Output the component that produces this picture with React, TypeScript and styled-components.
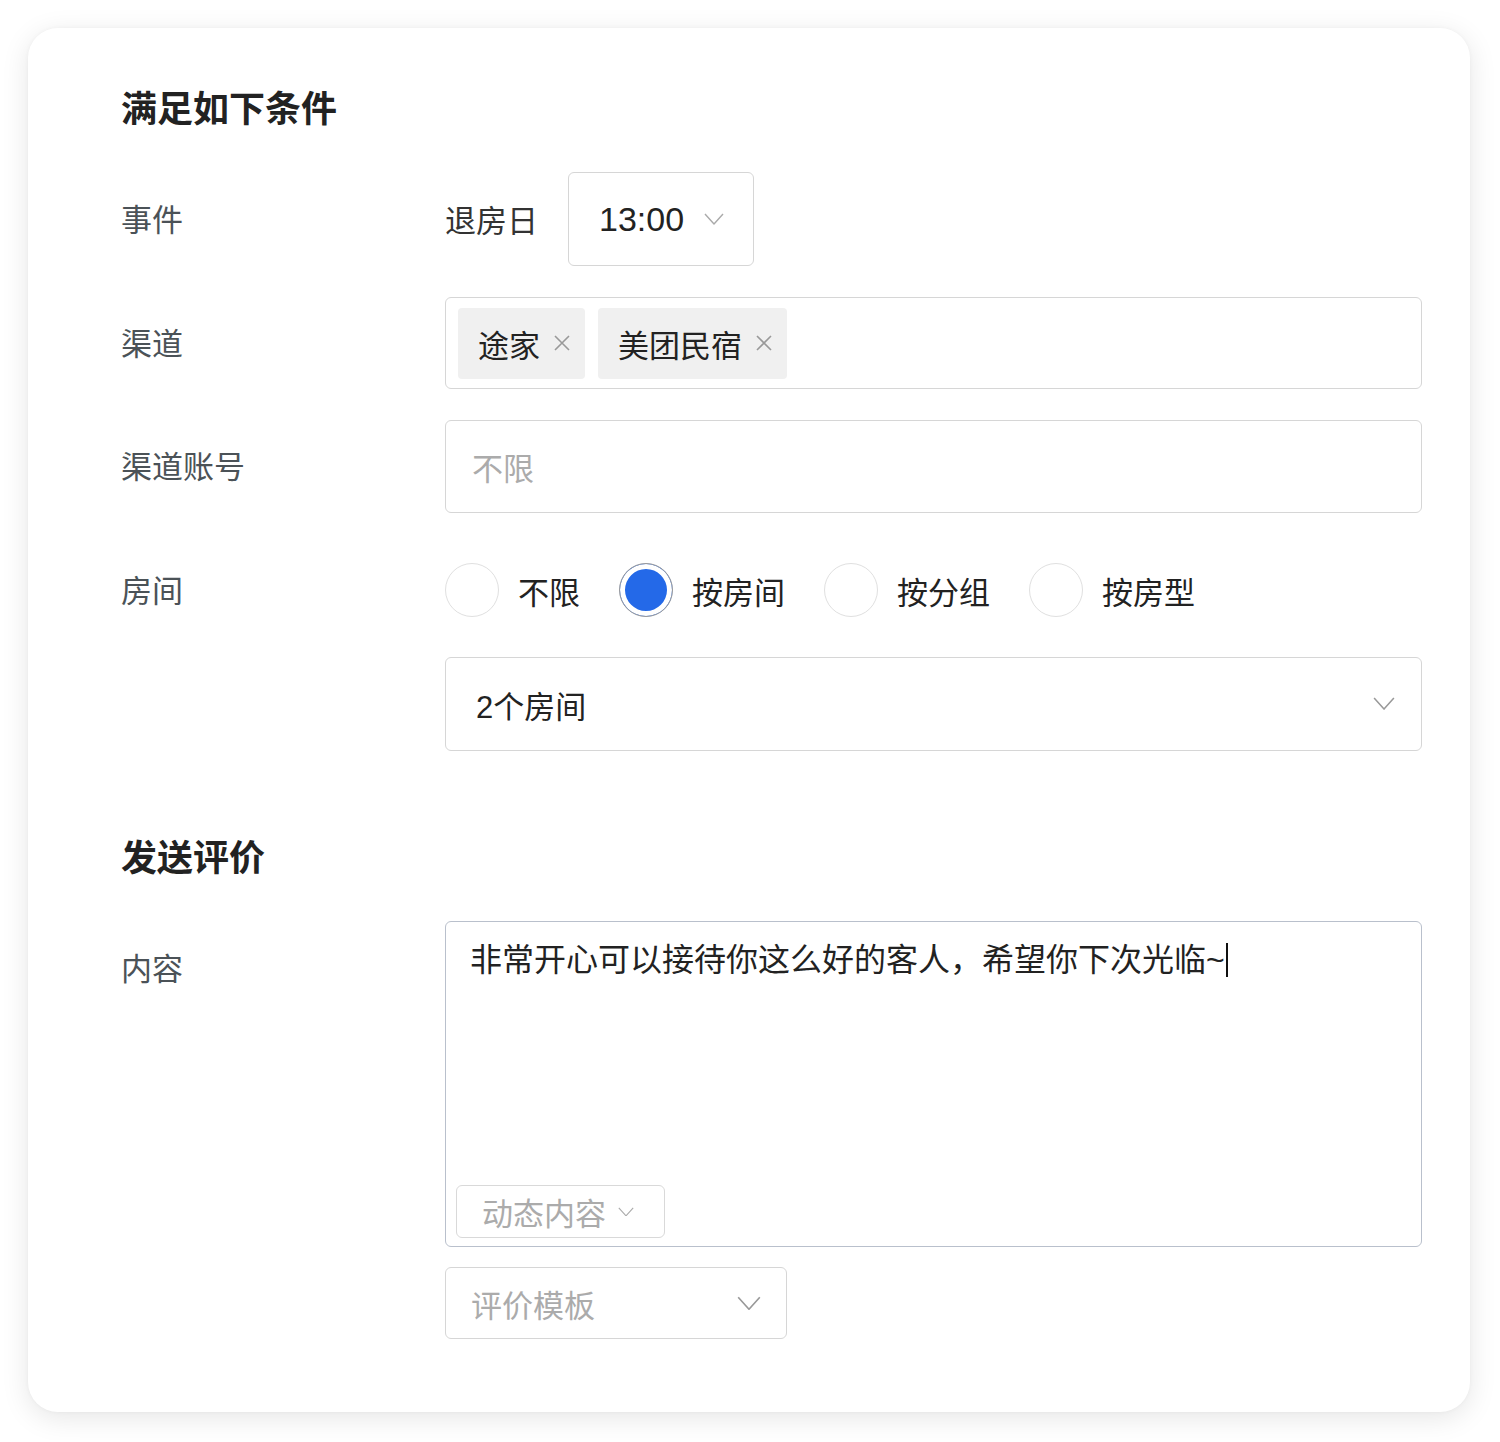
import React from "react";
import styled, { createGlobalStyle } from "styled-components";

const GlobalStyle = createGlobalStyle`
  html, body {
    margin: 0;
    padding: 0;
    background: #ffffff;
  }
  body {
    font-family: "Liberation Sans", "Noto Sans CJK SC", sans-serif;
    color: #222;
  }
`;

const Chevron = ({ size = 20, color = "#999" }: { size?: number; color?: string }) => (
  <svg width={size} height={size * 0.6} viewBox="0 0 20 12" fill="none">
    <path d="M1 1L10 11L19 1" stroke={color} strokeWidth="1.4" strokeLinejoin="round" />
  </svg>
);

const Close = () => (
  <svg width="18" height="18" viewBox="0 0 18 18" fill="none">
    <path d="M2 2L16 16M16 2L2 16" stroke="#999" strokeWidth="1.6" />
  </svg>
);

const roomOptions = ["不限", "按房间", "按分组", "按房型"];

const App = () => {
  return (
    <>
      <GlobalStyle />
      <Page>
        <Card>
          <SectionTitle>满足如下条件</SectionTitle>

          <Row>
            <Label>事件</Label>
            <Inline>
              <EventText>退房日</EventText>
              <TimeSelect>
                <TimeText>13:00</TimeText>
                <Chevron size={20} color="#aaa" />
              </TimeSelect>
            </Inline>
          </Row>

          <Row>
            <Label>渠道</Label>
            <TagBox>
              <Tag>
                途家
                <Close />
              </Tag>
              <Tag>
                美团民宿
                <Close />
              </Tag>
            </TagBox>
          </Row>

          <Row>
            <Label>渠道账号</Label>
            <InputBox $h={93}>
              <Placeholder>不限</Placeholder>
            </InputBox>
          </Row>

          <RadioRow>
            <Label>房间</Label>
            <RadioGroup>
              {roomOptions.map((opt, i) => (
                <RadioItem key={opt}>
                  <RadioCircle $checked={i === 1} />
                  <RadioLabel>{opt}</RadioLabel>
                </RadioItem>
              ))}
            </RadioGroup>
          </RadioRow>

          <Row>
            <span />
            <InputBox $between>
              <Value>2个房间</Value>
              <Chevron size={22} color="#999" />
            </InputBox>
          </Row>

          <SectionTitle $spaced>发送评价</SectionTitle>

          <TopRow>
            <TopLabel>内容</TopLabel>
            <Field>
              <TextArea>
                <AreaText>
                  非常开心可以接待你这么好的客人，希望你下次光临~
                  <Caret />
                </AreaText>
                <DynamicButton>
                  动态内容
                  <Chevron size={16} color="#aaa" />
                </DynamicButton>
              </TextArea>
              <TemplateSelect>
                <Placeholder>评价模板</Placeholder>
                <Chevron size={24} color="#999" />
              </TemplateSelect>
            </Field>
          </TopRow>
        </Card>
      </Page>
    </>
  );
};

export default App;

const Page = styled.div`
  padding: 28px 30px 28px 28px;
`;

const Card = styled.div`
  width: 1442px;
  box-sizing: border-box;
  padding: 62px 48px 73px 93px;
  background: #fff;
  border-radius: 30px;
  box-shadow: 0 6px 28px rgba(0, 0, 0, 0.1), 0 0 4px rgba(0, 0, 0, 0.04);
`;

const SectionTitle = styled.div<{ $spaced?: boolean }>`
  font-size: 36px;
  font-weight: 700;
  line-height: 40px;
  color: #222;
  margin-top: ${(p) => (p.$spaced ? "88px" : "0")};
  margin-bottom: 42px;
`;

const Row = styled.div`
  display: grid;
  grid-template-columns: 324px 1fr;
  align-items: center;
  margin-bottom: 31px;
`;

const RadioRow = styled(Row)`
  margin-top: 50px;
  margin-bottom: 40px;
`;

const TopRow = styled.div`
  display: grid;
  grid-template-columns: 324px 1fr;
  align-items: start;
`;

const Label = styled.div`
  font-size: 31px;
  color: #4b5257;
  line-height: 44px;
  padding-top: 3px;
`;

const TopLabel = styled(Label)`
  padding-top: 27px;
`;

const Inline = styled.div`
  display: flex;
  align-items: center;
  gap: 30px;
`;

const EventText = styled.span`
  font-size: 31px;
  color: #333;
  margin-top: -2px;
`;

const TimeSelect = styled.div`
  width: 186px;
  height: 94px;
  box-sizing: border-box;
  border: 1px solid #d6d6d6;
  border-radius: 6px;
  display: flex;
  align-items: center;
  padding-left: 30px;
  gap: 20px;
`;

const TimeText = styled.span`
  font-size: 34px;
  color: #222;
`;

const TagBox = styled.div`
  height: 92px;
  box-sizing: border-box;
  border: 1px solid #d6d6d6;
  border-radius: 6px;
  display: flex;
  align-items: center;
  gap: 13px;
  padding: 0 12px;
`;

const Tag = styled.div`
  height: 71px;
  box-sizing: border-box;
  background: #f0f0f0;
  border-radius: 4px;
  display: flex;
  align-items: center;
  gap: 13px;
  padding: 0 14px 0 20px;
  font-size: 31px;
  color: #222;
`;

const InputBox = styled.div<{ $between?: boolean; $h?: number }>`
  height: ${(p) => p.$h ?? 94}px;
  box-sizing: border-box;
  border: 1px solid #d6d6d6;
  border-radius: 6px;
  display: flex;
  align-items: center;
  justify-content: ${(p) => (p.$between ? "space-between" : "flex-start")};
  padding: 0 26px 0 26px;
`;

const Placeholder = styled.span`
  font-size: 31px;
  color: #ababab;
`;

const Value = styled.span`
  font-size: 31px;
  color: #222;
  padding-left: 4px;
`;

const RadioGroup = styled.div`
  display: flex;
  align-items: center;
  gap: 39px;
`;

const RadioItem = styled.label`
  display: flex;
  align-items: center;
  gap: 19px;
`;

const RadioCircle = styled.span<{ $checked?: boolean }>`
  width: 54px;
  height: 54px;
  box-sizing: border-box;
  border-radius: 50%;
  border: 1px solid ${(p) => (p.$checked ? "#9a9a9a" : "#e0e0e0")};
  background: ${(p) => (p.$checked ? "#2469e8" : "#fff")};
  box-shadow: ${(p) => (p.$checked ? "inset 0 0 0 5px #fff" : "none")};
`;

const RadioLabel = styled.span`
  font-size: 31px;
  color: #222;
`;

const Field = styled.div`
  display: flex;
  flex-direction: column;
  align-items: flex-start;
  gap: 20px;
`;

const TextArea = styled.div`
  width: 100%;
  height: 326px;
  box-sizing: border-box;
  border: 1px solid #b9c0cc;
  border-radius: 6px;
  display: flex;
  flex-direction: column;
  justify-content: space-between;
  padding: 16px 10px 8px 10px;
`;

const AreaText = styled.div`
  font-size: 32px;
  line-height: 44px;
  color: #222;
  padding-left: 14px;
  display: flex;
  align-items: center;
`;

const Caret = styled.span`
  display: inline-block;
  width: 2px;
  height: 34px;
  background: #111;
  margin-left: 1px;
`;

const DynamicButton = styled.div`
  width: 209px;
  height: 53px;
  box-sizing: border-box;
  border: 1px solid #d9d9d9;
  border-radius: 6px;
  display: flex;
  align-items: center;
  gap: 12px;
  padding-left: 25px;
  font-size: 31px;
  color: #ababab;
`;

const TemplateSelect = styled.div`
  width: 342px;
  height: 72px;
  box-sizing: border-box;
  border: 1px solid #d6d6d6;
  border-radius: 6px;
  display: flex;
  align-items: center;
  justify-content: space-between;
  padding: 0 25px;
`;
